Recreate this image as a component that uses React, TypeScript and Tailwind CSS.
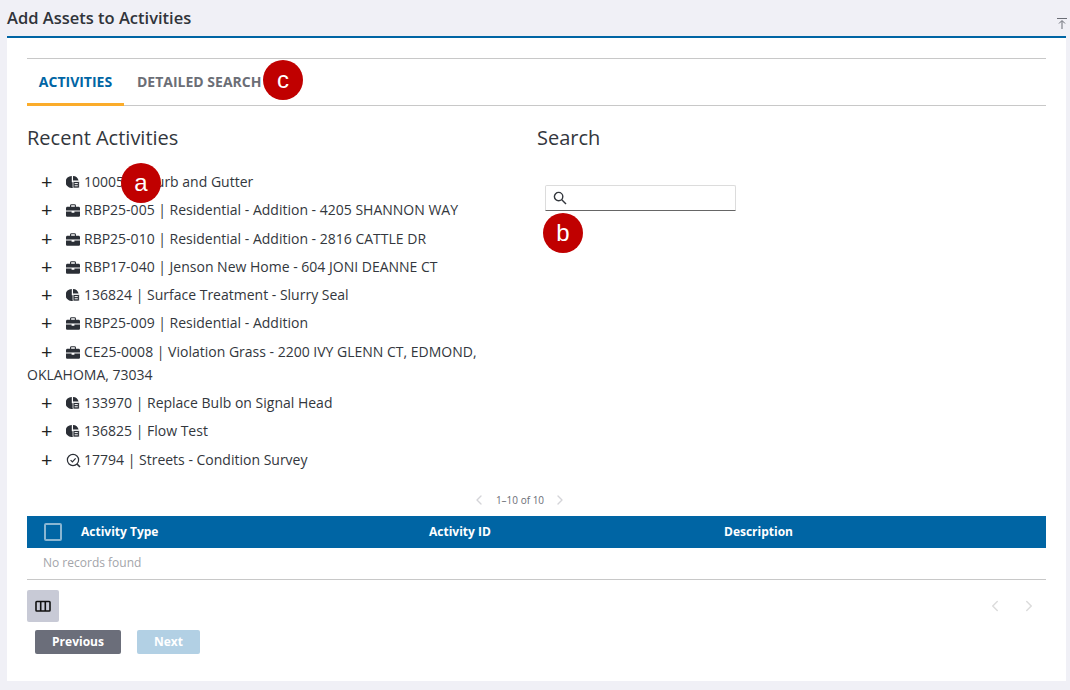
import React from "react";
import { ChevronLeft, ChevronRight } from "lucide-react";

const font = { fontFamily: '"Open Sans", "Noto Sans", sans-serif' };

const WorkIcon = () => (
  <svg width="14" height="14" viewBox="0 0 14 14" className="inline-block mr-[4px] ml-[13px] align-[-2px]">
    <path d="M5.8 1A6 6 0 1 0 5.4 13H8V7.2H5.8Z" fill="#2b2f36" />
    <path d="M7 1A6 6 0 0 1 12.6 5.6H7Z" fill="#2b2f36" />
    <rect x="7" y="6.5" width="6.4" height="6.6" rx="1" fill="#2b2f36" stroke="#fff" strokeWidth="0.8" />
    <path d="M8.6 8.6H11.8M8.6 10.8H11.8" stroke="#fff" strokeWidth="1" />
  </svg>
);

const CaseIcon = () => (
  <svg width="14" height="13" viewBox="0 0 14 13" className="inline-block mr-[4px] ml-[13px] align-[-2px]">
    <path d="M4.6 3V1.6C4.6 1 5 .7 5.5 .7H8.5C9 .7 9.4 1 9.4 1.6V3" fill="none" stroke="#2b2f36" strokeWidth="1.1" />
    <path d="M1.4 2.8H12.6C13.3 2.8 14 3.4 14 4.1V6.6H0V4.1C0 3.4.7 2.8 1.4 2.8Z" fill="#2b2f36" />
    <path d="M0 7.6H5.6V8.8H8.4V7.6H14V11.4C14 12.2 13.4 12.8 12.6 12.8H1.4C.6 12.8 0 12.2 0 11.4Z" fill="#2b2f36" />
  </svg>
);

const InspectIcon = () => (
  <svg width="15" height="15" viewBox="0 0 15 15" className="inline-block mr-[3px] ml-[13px] align-[-3px]" fill="none" stroke="#2b2f36" strokeWidth="1.2">
    <circle cx="7" cy="7" r="5.6" />
    <path d="M4.6 7.2L6.4 9L9.6 5.4" />
    <path d="M11 11L14 14" strokeWidth="1.6" />
  </svg>
);

const rows: { icon: "work" | "case" | "inspect"; text: string }[] = [
  { icon: "work", text: "100059 | Curb and Gutter" },
  { icon: "case", text: "RBP25-005 | Residential - Addition - 4205 SHANNON WAY" },
  { icon: "case", text: "RBP25-010 | Residential - Addition - 2816 CATTLE DR" },
  { icon: "case", text: "RBP17-040 | Jenson New Home - 604 JONI DEANNE CT" },
  { icon: "work", text: "136824 | Surface Treatment - Slurry Seal" },
  { icon: "case", text: "RBP25-009 | Residential - Addition" },
  { icon: "case", text: "CE25-0008 | Violation Grass - 2200 IVY GLENN CT, EDMOND, OKLAHOMA, 73034" },
  { icon: "work", text: "133970 | Replace Bulb on Signal Head" },
  { icon: "work", text: "136825 | Flow Test" },
  { icon: "inspect", text: "17794 | Streets - Condition Survey" },
];

const Badge = ({ label, className }: { label: string; className: string }) => (
  <div
    className={`absolute w-10 h-10 rounded-full bg-[#c00000] text-white text-[24px] flex items-center justify-center ${className}`}
    style={{ fontFamily: '"Liberation Sans", sans-serif' }}
  >
    {label}
  </div>
);

export default function App() {
  return (
    <div className="relative w-[1070px] h-[690px] overflow-hidden bg-[#f0f0f6] text-[#33373d]" style={font}>
      <div className="ml-[7px] w-[1059px]">
        <div className="h-[38px] border-b-2 border-[#0065a4] flex items-start justify-between">
          <h1 className="text-[16.5px] leading-[36px] font-semibold text-[#30343a]">Add Assets to Activities</h1>
          <svg width="10" height="11" viewBox="0 0 10 11" className="mt-[18px] mr-[-1px]" fill="none" stroke="#6b6e76" strokeWidth="1">
            <path d="M0 .5H10M5 11V3M2 5.5L5 2.5L8 5.5" />
          </svg>
        </div>

        <div className="h-[643px] bg-white px-5 pt-5">
          <div className="h-[48px] border-y border-[#c8c8c8] flex">
            <div className="h-[47px] w-[97px] border-b-[3px] border-[#fbac2a] text-center text-[14px] leading-[46px] font-bold text-[#0065a4]">
              ACTIVITIES
            </div>
            <div className="ml-[13px] text-[14px] leading-[46px] font-bold text-[#6b6e76]">DETAILED SEARCH</div>
          </div>

          <div className="flex mt-[18px] h-[361px]">
            <div className="w-[510px]">
              <h2 className="text-[20px] leading-[28px] text-[#33373d]">Recent Activities</h2>
              <ul className="mt-[18px] w-[455px] text-[14px] leading-[23px] text-[#33373d]">
                {rows.map((r) => (
                  <li key={r.text} className="pb-[5.3px]">
                    <span className="inline-block ml-[14px] w-[12px] text-[20px] leading-[20px] align-[-2px] text-[#222]">+</span>
                    {r.icon === "work" && <WorkIcon />}
                    {r.icon === "case" && <CaseIcon />}
                    {r.icon === "inspect" && <InspectIcon />}
                    {r.text}
                  </li>
                ))}
              </ul>
            </div>
            <div>
              <h2 className="text-[20px] leading-[28px] text-[#33373d]">Search</h2>
              <div className="mt-[33px] ml-[8px] w-[191px] h-[26px] bg-white border border-[#dcdcdc] border-b-[#666] rounded-t-[2px] flex items-center pl-[7px]">
                <svg width="14" height="14" viewBox="0 0 14 14" fill="none" stroke="#33373d" strokeWidth="1.4">
                  <circle cx="5.6" cy="5.6" r="4.2" />
                  <path d="M8.8 8.8L13 13" />
                </svg>
              </div>
            </div>
          </div>

          <div className="flex items-center justify-center h-[20px] mt-[5px] w-[985px] text-[#6b6e76]">
            <ChevronLeft size={16} className="text-[#d4d4d8] mr-[9px]" />
            <span className="text-[10px]">1–10 of 10</span>
            <ChevronRight size={16} className="text-[#d4d4d8] ml-[8px]" />
          </div>

          <div className="mt-[6px] h-[32px] bg-[#0065a4] flex items-center text-white text-[12px] font-bold">
            <div className="ml-[17px] w-[18px] h-[18px] border-2 border-[#8ab6d2] rounded-[2px]" />
            <span className="ml-[19px] w-[348px]">Activity Type</span>
            <span className="w-[295px]">Activity ID</span>
            <span>Description</span>
          </div>
          <div className="h-[32px] border-b border-[#c8c8c8] pl-[16px] text-[12px] leading-[30px] text-[#a3a5aa]">No records found</div>

          <div className="mt-[10px] flex items-start justify-between">
            <div className="w-[32px] h-[32px] rounded-[2px] bg-[#c8cad6] flex items-center justify-center">
              <svg width="16" height="12" viewBox="0 0 16 12" fill="none" stroke="#111" strokeWidth="1.6">
                <rect x="1" y="1.5" width="14" height="9.5" rx="0.8" />
                <path d="M5.7 1.5V11M10.3 1.5V11" />
              </svg>
            </div>
            <div className="flex gap-[16px] mt-[7px] mr-[8px] text-[#dcdcdc]">
              <ChevronLeft size={18} />
              <ChevronRight size={18} />
            </div>
          </div>

          <div className="mt-[8px] ml-[8px] flex gap-[16px] text-[12px] font-bold text-white">
            <button className="w-[86px] h-[24px] rounded-[2px] bg-[#6b6e7a]">Previous</button>
            <button className="w-[63px] h-[24px] rounded-[2px] bg-[#b2d0e4]">Next</button>
          </div>
        </div>
      </div>

      <Badge label="a" className="left-[121px] top-[163px]" />
      <Badge label="b" className="left-[543px] top-[213px]" />
      <Badge label="c" className="left-[263px] top-[60px]" />
    </div>
  );
}
